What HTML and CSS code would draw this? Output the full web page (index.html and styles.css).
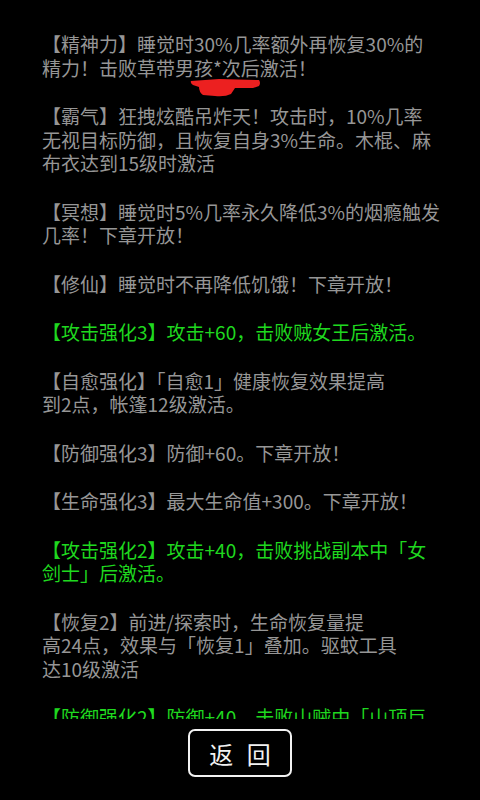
FILE: index.html
```html
<!DOCTYPE html>
<html lang="zh">
<head>
<meta charset="utf-8">
<link rel="stylesheet" href="styles.css">
</head>
<body>
<div class="page">
  <div class="list">
    <p class="item">【精神力】睡觉时30%几率额外再恢复30%的<br>精力！击败草带男孩*次后激活！</p>
    <p class="item">【霸气】狂拽炫酷吊炸天！攻击时，10%几率<br>无视目标防御，且恢复自身3%生命。木棍、麻<br>布衣达到15级时激活</p>
    <p class="item">【冥想】睡觉时5%几率永久降低3%的烟瘾触发<br>几率！下章开放！</p>
    <p class="item">【修仙】睡觉时不再降低饥饿！下章开放！</p>
    <p class="item on">【攻击强化3】攻击+60，击败贼女王后激活。</p>
    <p class="item">【自愈强化】「自愈1」健康恢复效果提高<br>到2点，帐篷12级激活。</p>
    <p class="item">【防御强化3】防御+60。下章开放！</p>
    <p class="item">【生命强化3】最大生命值+300。下章开放！</p>
    <p class="item on">【攻击强化2】攻击+40，击败挑战副本中「女<br>剑士」后激活。</p>
    <p class="item">【恢复2】前进/探索时，生命恢复量提<br>高24点，效果与「恢复1」叠加。驱蚊工具<br>达10级激活</p>
    <p class="item on">【防御强化2】防御+40，击败山贼中「山顶巨<br>人」后激活。</p>
    <svg class="scribble" width="80" height="30" viewBox="0 0 80 30">
      <path d="M2 3 L30 1 L70 2 Q72 5 70 8 L64 10 L46 10 L42 16 Q36 19 26 18 L14 17 Q10 14 10 9 L4 7 Q1 5 2 3 Z" fill="#ec2020"/>
    </svg>
  </div>
  <div class="footer">
    <div class="back">返 回</div>
  </div>
</div>
</body>
</html>
```
FILE: styles.css
```css
html, body {
  margin: 0;
  padding: 0;
  background: #000;
}
.page {
  width: 480px;
  height: 800px;
  display: flex;
  flex-direction: column;
  font-family: "Noto Sans CJK SC", "Noto Sans", sans-serif;
}
.list {
  position: relative;
  height: 719px;
  overflow: hidden;
  box-sizing: border-box;
  padding: 32px 0 0 42px;
  display: flex;
  flex-direction: column;
  gap: 25px;
}
.item {
  margin: 0;
  font-size: 19px;
  line-height: 23.5px;
  color: #969696;
  white-space: nowrap;
  flex-shrink: 0;
}
.item.on {
  color: #1fd81f;
}
.scribble {
  position: absolute;
  left: 189px;
  top: 78px;
}
.footer {
  flex: 1;
  display: flex;
  justify-content: center;
  align-items: flex-start;
  padding-top: 10px;
}
.back {
  width: 104px;
  height: 48px;
  box-sizing: border-box;
  border: 2px solid #f2f2f2;
  border-radius: 7px;
  color: #f2f2f2;
  font-size: 24px;
  word-spacing: 8px;
  display: flex;
  align-items: center;
  justify-content: center;
}
```
